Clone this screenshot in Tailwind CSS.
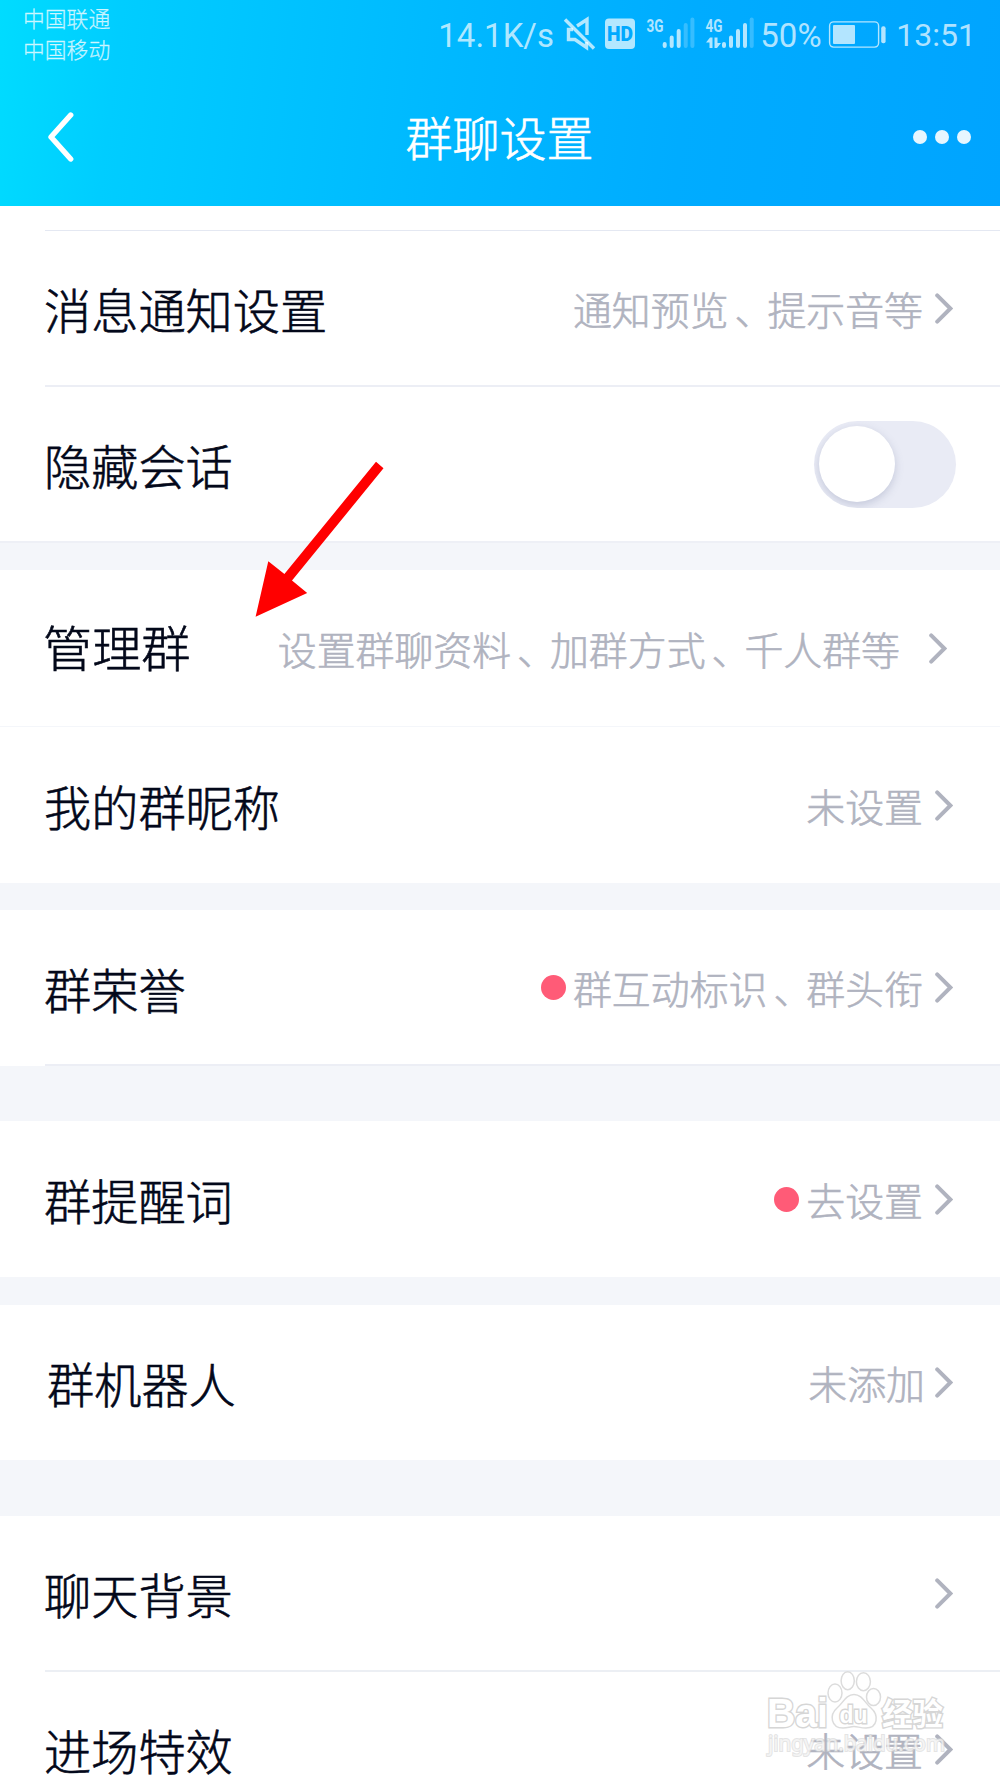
<!DOCTYPE html>
<html lang="zh-CN">
<head>
    <meta charset="UTF-8">
    <meta name="viewport" content="width=device-width, initial-scale=1.0">
    <title>群聊设置</title>
    <script src="https://cdn.jsdelivr.net/npm/@tailwindcss/browser@4"></script>
    <style>
        body {
            font-family: 'Noto Sans CJK SC', sans-serif;
        }
        .status-text {
            font-family: Roboto, sans-serif;
        }
        /* between the light and regular cuts */
        main, h1 {
            -webkit-text-stroke: 0.6px currentColor;
        }
        .carriers {
            -webkit-text-stroke: 0.3px currentColor;
        }
    </style>
</head>
<body class="relative w-[1000px] h-[1778px] overflow-hidden bg-white text-[#03081a]">

    <!-- Shared chevron -->
    <svg class="hidden">
        <symbol id="chevron" viewBox="0 0 18 31">
            <path d="M2.2 2.4 L15.4 15.5 L2.2 28.6" fill="none" stroke="#b0b3bf" stroke-width="4" stroke-linecap="round" stroke-linejoin="miter"/>
        </symbol>
    </svg>

    <header class="h-[206px] bg-[linear-gradient(97deg,#00dcff_0%,#00cdff_12%,#00c3ff_27%,#00b8ff_45%,#00acff_68%,#00a4ff_100%)] text-white">
        <!-- Status bar -->
        <div class="h-[68px] flex justify-between pl-[23px] pr-6 text-white/70">
            <div class="carriers pt-[3px] text-[21.8px] leading-[30.5px] font-light">
                <p>中国联通</p>
                <p>中国移动</p>
            </div>
            <div class="status-text flex h-[68px] items-center text-[32px] leading-none">
                <span class="w-[126px] pt-0.5 text-[33px] whitespace-nowrap">14.1K/s</span>
                <svg class="-ml-0.5 shrink-0" width="196" height="68" viewBox="562 0 196 68">
                    <g fill="none" stroke="currentColor" stroke-width="3.4">
                        <path d="M565 19.5 L594 48.5"/>
                        <path d="M577 26 L587 19.5 V35"/>
                        <path d="M573 29.5 H568.5 V39.5 H575 L586.5 47.5 V42"/>
                    </g>
                    <path fill="currentColor" d="M609 18.5 H631 a4 4 0 0 1 4 4 V45 a4 4 0 0 1 -4 4 H609 a4 4 0 0 1 -4 -4 V22.5 a4 4 0 0 1 4 -4 Z"/>
                    <text x="607" y="41" font-size="20" font-weight="900" fill="#00a9ff" textLength="26" lengthAdjust="spacingAndGlyphs">HD</text>
                    <g fill="currentColor" font-size="18" font-weight="700">
                        <text x="646.5" y="31.5" textLength="17" lengthAdjust="spacingAndGlyphs">3G</text>
                        <text x="705.5" y="31.5" textLength="17" lengthAdjust="spacingAndGlyphs">4G</text>
                    </g>
                    <g stroke="currentColor" stroke-width="4" stroke-linecap="round">
                        <path d="M664.7 44 V46 M671.7 37.5 V46 M678.7 31 V46"/>
                        <path d="M685.7 25 V46 M692.4 19.5 V46" opacity=".3"/>
                        <path d="M724 44 V46 M731 37.5 V46 M738 31 V46 M745 25 V46"/>
                        <path d="M751.7 19.5 V46" opacity=".3"/>
                    </g>
                    <path d="M706 42.5 L710 37.5 H712.5 V48 H709.5 V42.5 Z M714.5 37.5 H717.5 V43 H721 L717 48 H714.5 Z" fill="currentColor"/>
                </svg>
                <span class="w-[70px] pt-0.5 pl-0.5 text-[33px] whitespace-nowrap">50%</span>
                <svg class="shrink-0" width="58" height="68" viewBox="828 0 58 68">
                    <rect x="829.6" y="21.9" width="49" height="25.2" rx="4" fill="none" stroke="currentColor" stroke-width="1.4"/>
                    <rect x="833" y="25" width="22" height="19" rx="1" fill="currentColor"/>
                    <rect x="881.2" y="26.3" width="4.4" height="17" rx="2" fill="currentColor"/>
                </svg>
                <span class="pt-0.5 pl-2.5 whitespace-nowrap">13:51</span>
            </div>
        </div>

        <!-- Title bar -->
        <div class="h-[138px] grid grid-cols-[1fr_auto_1fr] items-center pl-12 pr-[29px]">
            <svg class="w-[26px] h-[50px]" viewBox="49 112 26 50">
                <path d="M71.7 115 L52 137 L71.7 159" fill="none" stroke="currentColor" stroke-width="5.4" stroke-linecap="round" stroke-linejoin="round"/>
            </svg>
            <h1 class="text-[47px] leading-none font-light pr-[20px] pb-[3px]">群聊设置</h1>
            <div class="flex gap-2 justify-end">
                <span class="w-3.5 h-3.5 rounded-full bg-white/90"></span>
                <span class="w-3.5 h-3.5 rounded-full bg-white/90"></span>
                <span class="w-3.5 h-3.5 rounded-full bg-white/90"></span>
            </div>
        </div>
    </header>

    <main class="text-[47.2px] leading-none font-light">
        <div class="h-[25px] ml-[45px] border-b border-[#e4e8f2]"></div>

        <div class="h-[156px] ml-[45px] pr-[47px] border-b-2 border-[#eceef5] flex items-center">
            <span class="pt-px -ml-px">消息通知设置</span>
            <span class="ml-auto text-[38.9px] text-[#b0b3bf]">通知预览<span class="inline-block translate-x-1.5">、</span>提示音等</span>
            <svg class="w-[18px] h-[31px] ml-3"><use href="#chevron"/></svg>
        </div>
        <div class="h-[154px] pl-11 pr-11 flex items-center">
            <span class="pt-px">隐藏会话</span>
            <span class="ml-auto w-[142px] h-[87px] rounded-full bg-[#e9ebf5] pl-[5px] flex items-center overflow-hidden">
                <span class="w-[76px] h-[76px] rounded-full bg-white shadow-[0_3px_8px_rgba(100,110,150,0.28)]"></span>
            </span>
        </div>

        <div class="h-[29px] bg-[#f4f6fa] border-t-2 border-[#eef0f6]"></div>

        <div class="h-[157px] pl-[43px] pr-[53px] border-b border-[#f4f6fa] flex items-center">
            <span class="text-[49.2px] -mt-1">管理群</span>
            <span class="ml-auto text-[38.9px] text-[#b0b3bf]">设置群聊资料<span class="inline-block translate-x-1.5">、</span>加群方式<span class="inline-block translate-x-1.5">、</span>千人群等</span>
            <svg class="w-[18px] h-[31px] ml-[29px]"><use href="#chevron"/></svg>
        </div>
        <div class="h-[156px] pl-11 pr-[47px] flex items-center">
            <span class="pt-px">我的群昵称</span>
            <span class="ml-auto text-[38.9px] text-[#b0b3bf]">未设置</span>
            <svg class="w-[18px] h-[31px] ml-3"><use href="#chevron"/></svg>
        </div>

        <div class="h-[27px] bg-[#f4f6fa]"></div>

        <div class="h-[156px] ml-[45px] pr-[47px] border-b-2 border-[#eceef5] flex items-center">
            <span class="pt-[3px] -ml-px">群荣誉</span>
            <span class="ml-auto mr-[7px] w-[25px] h-[25px] rounded-full bg-[#ff5b77]"></span>
            <span class="text-[38.9px] text-[#b0b3bf]">群互动标识<span class="inline-block translate-x-1.5">、</span>群头衔</span>
            <svg class="w-[18px] h-[31px] ml-3"><use href="#chevron"/></svg>
        </div>

        <div class="h-[55px] bg-[#f4f6fa]"></div>

        <div class="h-[156px] pl-11 pr-[47px] flex items-center">
            <span class="pt-px">群提醒词</span>
            <span class="ml-auto mr-[7px] w-[25px] h-[25px] rounded-full bg-[#ff5b77]"></span>
            <span class="text-[38.9px] text-[#b0b3bf]">去设置</span>
            <svg class="w-[18px] h-[31px] ml-3"><use href="#chevron"/></svg>
        </div>

        <div class="h-7 bg-[#f4f6fa]"></div>

        <div class="h-[155px] pl-[47px] pr-[47px] flex items-center">
            <span class="pt-px">群机器人</span>
            <span class="ml-auto text-[38.9px] text-[#b0b3bf]">未添加</span>
            <svg class="w-[18px] h-[31px] ml-2.5"><use href="#chevron"/></svg>
        </div>

        <div class="h-14 bg-[#f4f6fa]"></div>

        <div class="h-[156px] ml-[45px] pr-[47px] border-b-2 border-[#eceff4] flex items-center">
            <span class="pt-px -ml-px">聊天背景</span>
            <svg class="w-[18px] h-[31px] ml-auto"><use href="#chevron"/></svg>
        </div>
        <div class="h-[155px] pl-11 pr-[47px] flex items-center">
            <span class="pt-px">进场特效</span>
            <span class="ml-auto text-[38.9px] text-[#b0b3bf]">未设置</span>
            <svg class="w-[18px] h-[31px] ml-3"><use href="#chevron"/></svg>
        </div>
    </main>

    <!-- Red pointer over the list -->
    <svg class="absolute left-[250px] top-[456px]" width="140" height="166" viewBox="250 456 140 166">
        <path d="M376 461.8 L383.5 468.3 L292 580.5 L307.2 593 L255.6 616.8 L268.3 561.3 L284.4 574 Z" fill="#ff0000"/>
    </svg>

    <!-- Watermark -->
    <svg class="absolute left-[760px] top-[1664px]" width="200" height="100" viewBox="760 1664 200 100">
        <g fill="#fff" fill-opacity=".8" stroke="#dcdcdc" stroke-width="1.5">
            <ellipse cx="835" cy="1693" rx="7" ry="9"/>
            <ellipse cx="847.7" cy="1680.7" rx="6.6" ry="9"/>
            <ellipse cx="863.4" cy="1681.7" rx="7" ry="9"/>
            <ellipse cx="873.5" cy="1697" rx="7" ry="8.6"/>
            <path d="M854 1694.5 C862 1694.5 865 1703 871 1708 C879 1715 878 1728 866 1728 C860 1728 858 1726.5 854 1726.5 C850 1726.5 848 1728 843 1728 C831 1728 829 1715 837 1708 C843 1703 846 1694.5 854 1694.5 Z"/>
        </g>
        <g fill="#fff" stroke="#d6d6d6" stroke-width="2.8" paint-order="stroke" font-weight="700" font-family="'Liberation Sans', 'Noto Sans CJK SC', sans-serif">
            <text x="767" y="1726.5" font-size="40" textLength="61" lengthAdjust="spacingAndGlyphs">Bai</text>
            <text x="839.5" y="1722.5" font-size="24" textLength="28" lengthAdjust="spacingAndGlyphs">du</text>
            <text x="882" y="1724.5" font-size="30.5">经验</text>
        </g>
        <text x="768" y="1750.5" font-size="21" fill="#fff" fill-opacity=".6" stroke="#d2d2d2" stroke-opacity=".6" stroke-width="2" paint-order="stroke" font-family="'Noto Sans', sans-serif" textLength="177" lengthAdjust="spacingAndGlyphs">jingyan.baidu.com</text>
    </svg>

</body>
</html>
